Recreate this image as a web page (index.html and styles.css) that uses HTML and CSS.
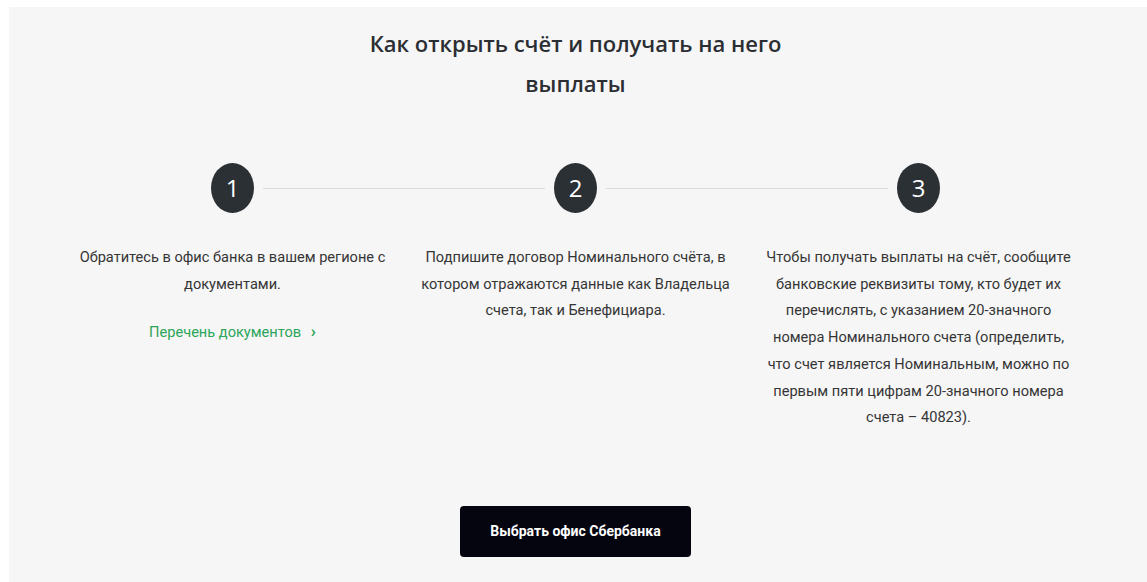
FILE: index.html
```html
<!DOCTYPE html>
<html lang="ru">
<head>
<meta charset="utf-8">
<title>Номинальный счёт</title>
<link rel="stylesheet" href="styles.css">
</head>
<body>
<div class="page">
  <p class="doc-line">Форма запроса о предоставлении информации (pdf, 258 Кб) / Сведения о бенефициаре</p>
  <section class="howto">
    <h2 class="howto-title">Как открыть счёт и получать на него выплаты</h2>
    <ol class="steps">
      <li class="step step-first">
        <div class="step-head"><span class="step-num">1</span></div>
        <p class="step-text">Обратитесь в офис банка в вашем регионе с документами.</p>
        <a class="step-link" href="#">Перечень документов <span class="chev">›</span></a>
      </li>
      <li class="step">
        <div class="step-head"><span class="step-num">2</span></div>
        <p class="step-text">Подпишите договор Номинального счёта, в котором отражаются данные как Владельца счета, так и Бенефициара.</p>
      </li>
      <li class="step step-last">
        <div class="step-head"><span class="step-num">3</span></div>
        <p class="step-text">Чтобы получать выплаты на счёт, сообщите банковские реквизиты тому, кто будет их перечислять, с указанием 20-значного номера Номинального счета (определить, что счет является Номинальным, можно по первым пяти цифрам 20-значного номера счета – 40823).</p>
      </li>
    </ol>
    <div class="howto-action">
      <a class="btn-office" href="#">Выбрать офис Сбербанка</a>
    </div>
  </section>
</div>
</body>
</html>
```

FILE: styles.css
```css
html, body {
  margin: 0;
  background: #ffffff;
}

.page {
  padding-left: 9px;
  overflow: hidden;
  height: 582px;
}

/* previous block, scrolled mostly out of view */
.doc-line {
  margin: -20px 0 7px 0;
  font: 16px/20px "Liberation Serif", serif;
  color: #111;
  white-space: nowrap;
}

.howto {
  background: #f6f6f6;
  padding: 16px 57px 40px 52px;
  min-height: 575px;
  box-sizing: border-box;
}

.howto-title {
  margin: 0 auto;
  width: 460px;
  text-align: center;
  font: 600 22px/40px "Open Sans", sans-serif;
  color: #2b2e33;
}

.steps {
  list-style: none;
  margin: 60px 0 0;
  padding: 0;
  display: grid;
  grid-template-columns: repeat(3, 343px);
}

.step {
  display: flex;
  flex-direction: column;
  align-items: center;
}

.step-head {
  display: flex;
  align-items: center;
  width: 100%;
}

.step-head::before,
.step-head::after {
  content: "";
  flex: 1;
  height: 1px;
  background: #d8d9de;
}

.step-head::before { margin-right: 9px; }
.step-head::after { margin-left: 9px; }

.step-first .step-head::before,
.step-last .step-head::after {
  background: transparent;
}

.step-num {
  width: 43px;
  height: 50px;
  border-radius: 50%;
  background: #2b3035;
  color: #ffffff;
  display: flex;
  align-items: center;
  justify-content: center;
  font: 400 24px/1 "Open Sans", sans-serif;
}

.step-text {
  margin: 31px 0 0;
  width: 313px;
  text-align: center;
  font: 14.6px/26.7px Roboto, sans-serif;
  color: #353535;
}

.step-link {
  margin-top: 21px;
  font: 14.6px/26.7px Roboto, sans-serif;
  color: #2ba55a;
  text-decoration: none;
}

.chev {
  margin-left: 6px;
  font-weight: 700;
  font-size: 17px;
}

.howto-action {
  display: flex;
  justify-content: center;
  margin-top: 75px;
}

.btn-office {
  width: 231px;
  height: 51px;
  border-radius: 4px;
  background: #05050f;
  color: #ffffff;
  display: flex;
  align-items: center;
  justify-content: center;
  font: 700 14px/1 Roboto, sans-serif;
  text-decoration: none;
}
```
